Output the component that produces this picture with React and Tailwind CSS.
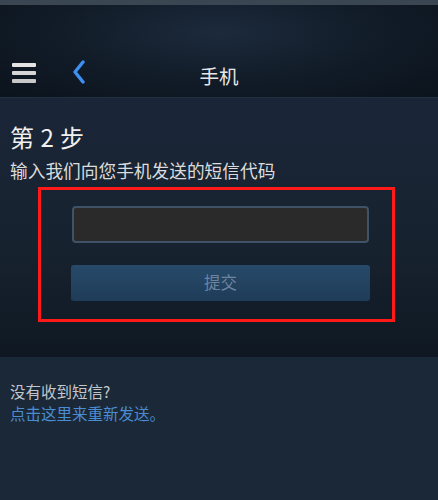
import React from 'react';

const font = { fontFamily: '"Noto Sans CJK SC", "Noto Sans", sans-serif' };

const App = () => {
  return (
    <div className="w-[438px] h-[500px] overflow-hidden bg-[#1b2838] flex flex-col" style={font}>
      {/* Header */}
      <div className="h-[5px] bg-[#3b4653]"></div>
      <div className="h-[92px] bg-[radial-gradient(ellipse_at_50%_30%,#1c2a3c_0%,#111b27_55%,#0b131c_100%)] flex items-end pb-[12px] relative">
        <div className="w-[24px] flex flex-col gap-[4px] ml-[12px] mb-[2px]">
          <div className="h-[4px] bg-[#e4e4e4] rounded-[1px]"></div>
          <div className="h-[4px] bg-[#d6d6d6] rounded-[1px]"></div>
          <div className="h-[4px] bg-[#c8c8c8] rounded-[1px]"></div>
        </div>
        <svg className="ml-[35px] mb-[1px]" width="16" height="24" viewBox="0 0 16 24">
          <path d="M12 2 L4 12 L12 22" fill="none" stroke="#3d8ff0" strokeWidth="3.4" strokeLinecap="round" strokeLinejoin="round" />
        </svg>
        <div className="absolute left-0 right-0 bottom-[12px] text-center text-[19.5px] text-[#e6e6e6] leading-none">手机</div>
      </div>
      <div className="h-[1px] bg-[#22303f]"></div>

      {/* Step */}
      <div className="h-[259px] bg-[linear-gradient(to_bottom,#1a2638_0%,#17222f_60%,#0f1822_100%)] px-[10px] pt-[27px]">
        <div className="text-[24px] text-[#f0f0f0] leading-none tracking-[0.5px]">第 2 步</div>
        <div className="mt-[13px] text-[17.7px] text-[#dcdcdc] leading-none">输入我们向您手机发送的短信代码</div>
        <div className="mt-[7px] ml-[28px] w-[357px] h-[135px] border-[3px] border-[#ff1a1a] flex flex-col items-start pt-[16px]">
          <div className="ml-[31px] w-[297px] h-[37px] bg-[#2a2a2a] border-2 border-[#3f5266] rounded-[4px]"></div>
          <div className="mt-[22px] ml-[30px] w-[299px] h-[36px] rounded-[3px] bg-[linear-gradient(to_bottom,#274a6a,#1f3c58)] flex items-center justify-center text-[16.5px] text-[#6c84a0]">提交</div>
        </div>
      </div>

      {/* Resend */}
      <div className="flex-1 px-[10px] pt-[23px]">
        <div className="text-[15.5px] text-[#c2c7cc] leading-[22px]">没有收到短信?</div>
        <div className="text-[15.5px] text-[#4a8dd2] leading-[22px]">点击这里来重新发送。</div>
      </div>
    </div>
  );
};

export default App;
